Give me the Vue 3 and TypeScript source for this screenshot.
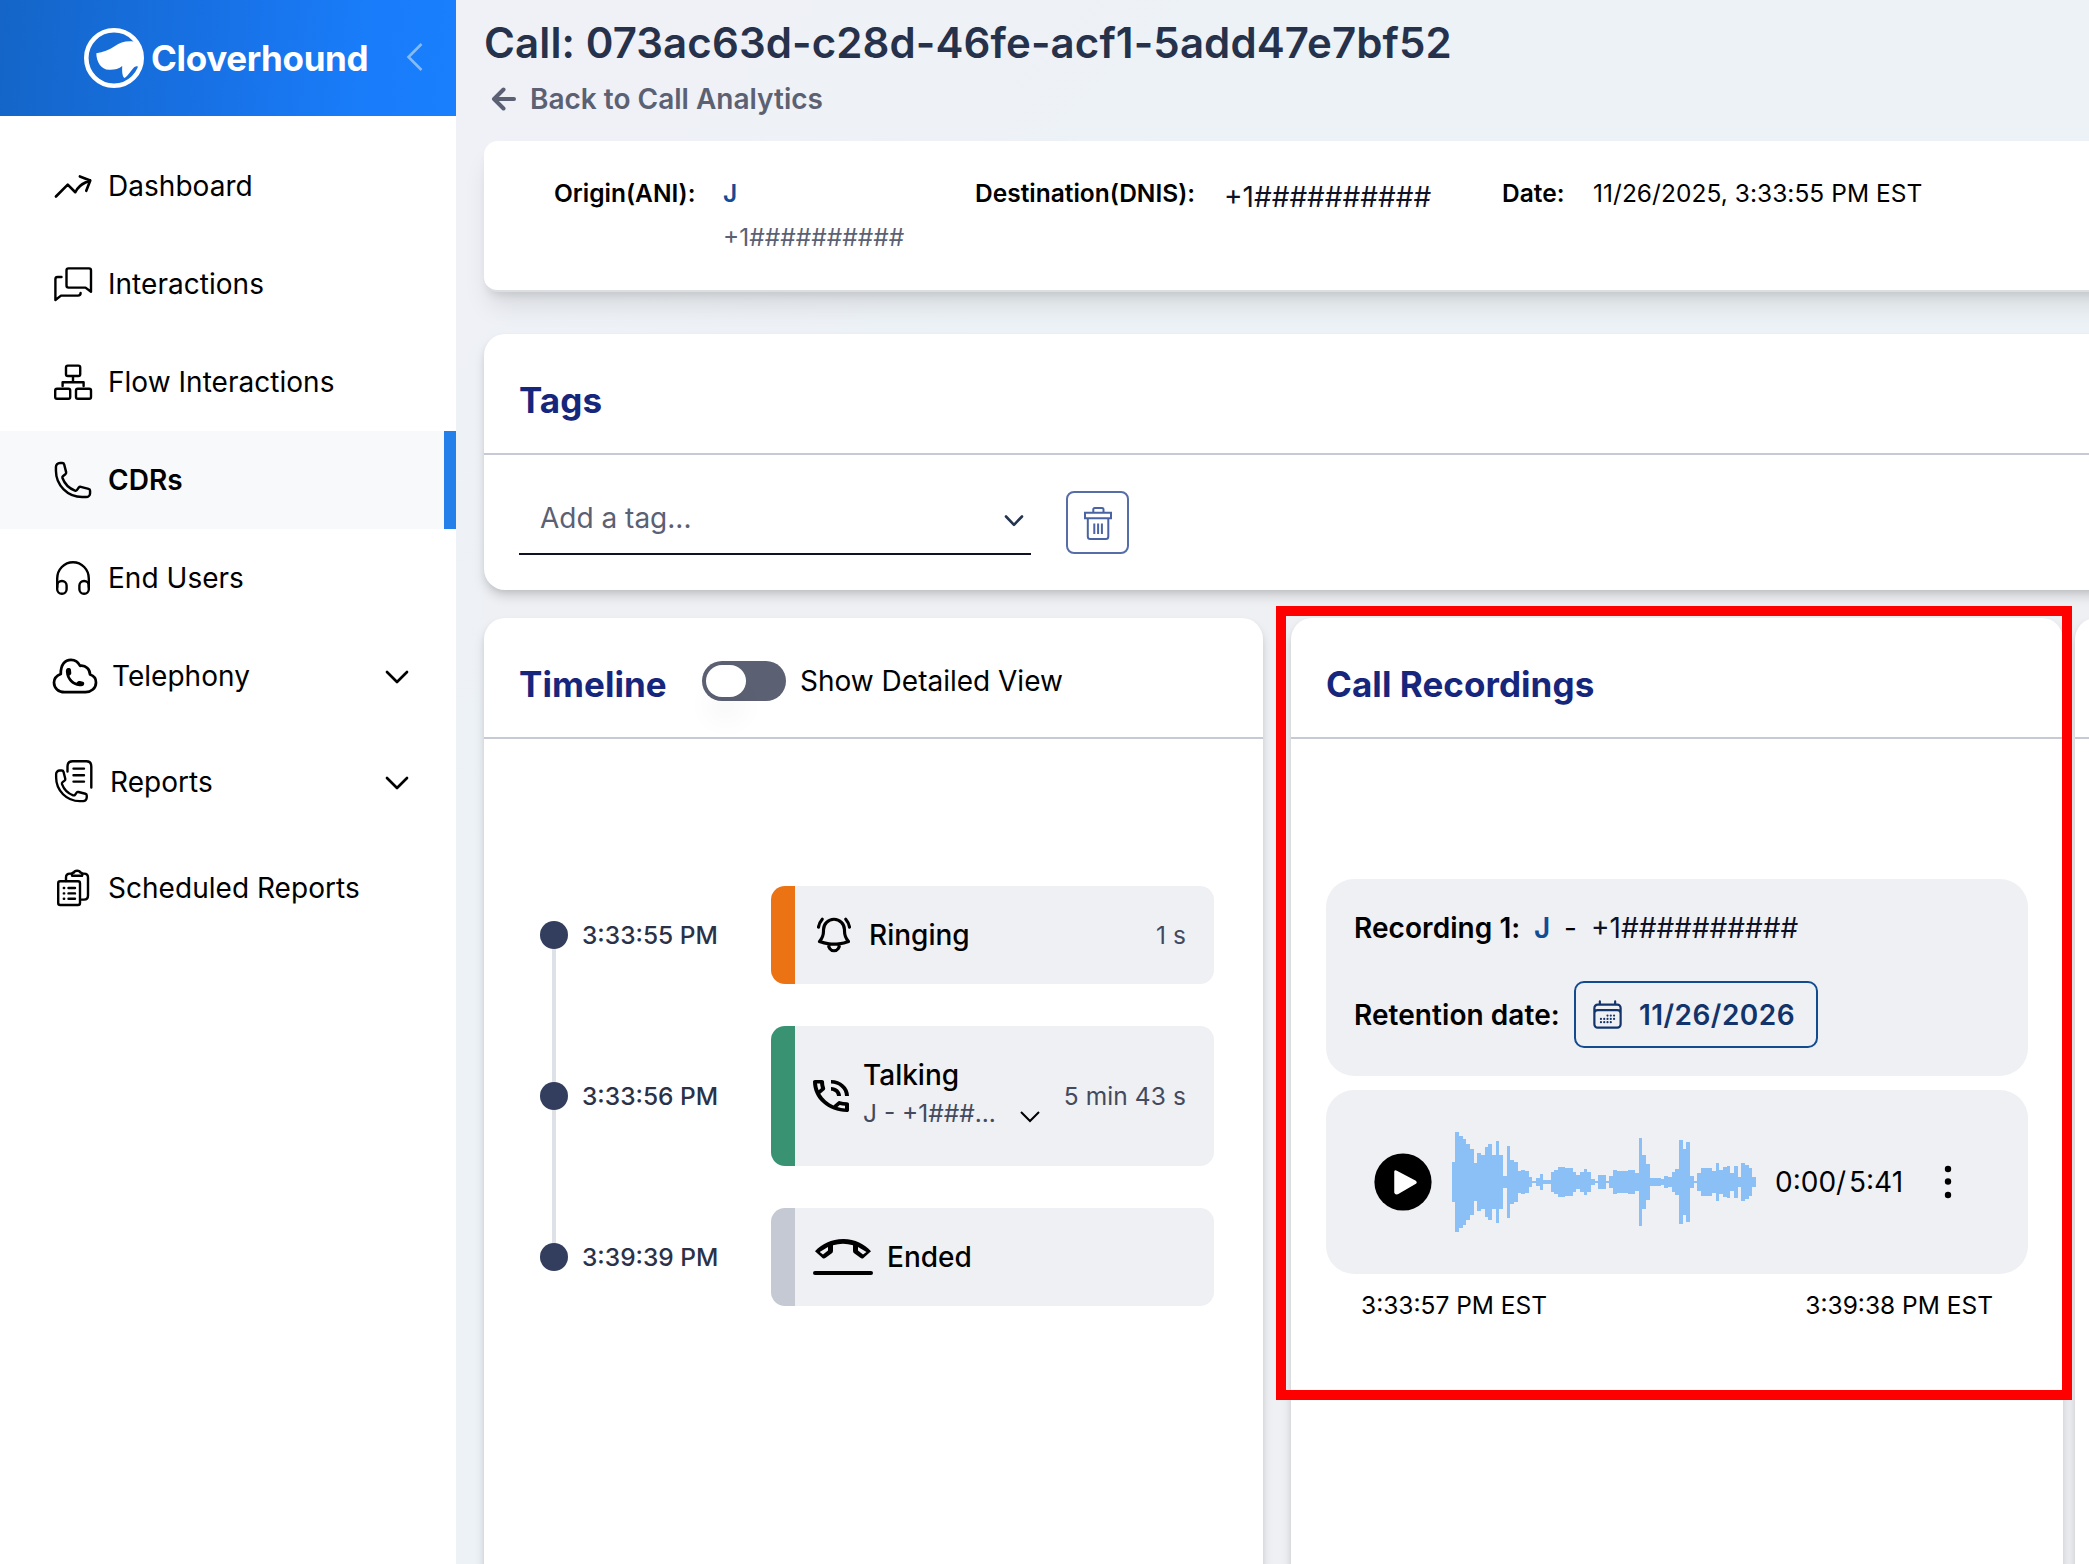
<script setup lang="ts">
interface NavItem {
  label: string
  icon: string
  active?: boolean
  expandable?: boolean
  spaced?: boolean
}

const navItems: NavItem[] = [
  { label: 'Dashboard', icon: 'trend' },
  { label: 'Interactions', icon: 'chat' },
  { label: 'Flow Interactions', icon: 'flow' },
  { label: 'CDRs', icon: 'phone', active: true },
  { label: 'End Users', icon: 'headphones' },
  { label: 'Telephony', icon: 'cloud', expandable: true },
  { label: 'Reports', icon: 'reports', expandable: true, spaced: true },
  { label: 'Scheduled Reports', icon: 'clipboard' },
]

interface TimelineEvent {
  time: string
  kind: string
  label: string
  detail?: string
  duration?: string
}

const events: TimelineEvent[] = [
  { time: '3:33:55 PM', kind: 'ringing', label: 'Ringing', duration: '1 s' },
  { time: '3:33:56 PM', kind: 'talking', label: 'Talking', detail: 'J - +1###...', duration: '5 min 43 s' },
  { time: '3:39:39 PM', kind: 'ended', label: 'Ended' },
]

// Half-heights of the waveform samples, in pixels
const peaks: number[] = [
  20, 50, 46, 43, 38, 33, 19, 29, 27, 35, 38, 27, 41, 27, 6, 36, 22, 20, 11, 12, 11, 5, 1, 4, 8, 2, 2, 10,
  12, 15, 15, 14, 14, 10, 7, 10, 13, 10, 3, 1, 7, 7, 1, 6, 12, 11, 11, 11, 12, 12, 9, 44, 27, 18, 4, 4, 4,
  3, 6, 5, 10, 13, 42, 33, 40, 6, 1, 9, 14, 14, 14, 11, 19, 12, 15, 16, 9, 16, 5, 19, 17, 14, 5,
]
const bars = peaks.map((half, i) => {
  const x = Math.floor((i * 11) / 3)
  return { x, w: Math.floor(((i + 1) * 11) / 3) - x, y: 50 - half, h: half * 2 }
})
</script>

<template>
  <div class="app">
    <aside class="sidebar">
      <header class="brand">
        <svg class="brand-logo" viewBox="84 28 60 60" width="60" height="60">
          <circle cx="114" cy="58" r="27.7" fill="none" stroke="#fff" stroke-width="4.6" />
          <path
            fill="#fff"
            d="M96.3 53.2C103 52 109 50 115 46C120 42.500 126 40.500 133.500 41.500L140 47L142 58L139 68C138 66 136.500 65.500 134.500 67C131 70 128.500 75.500 124.500 78C122 76.500 122 71 122.200 66C119 69 114 70 109 69.800C101 69.500 96.500 62 96.300 53.200Z"
          />
        </svg>
        <span class="brand-name">Cloverhound</span>
        <svg class="collapse" viewBox="0 0 18 32" width="18" height="32">
          <path d="M15.500 3L2.500 16L15.500 29" />
        </svg>
      </header>

      <nav class="nav">
        <a
          v-for="item in navItems"
          :key="item.label"
          class="nav-item"
          :class="[item.icon, { active: item.active, spaced: item.spaced }]"
        >
          <svg v-if="item.icon === 'trend'" class="nav-icon" viewBox="0 0 24 24">
            <path stroke-width="1.5" d="M2.25 18 9 11.25l4.306 4.306a11.95 11.95 0 0 1 5.814-5.518l2.74-1.22m0 0-5.94-2.281m5.94 2.28-2.28 5.941" />
          </svg>
          <svg v-else-if="item.icon === 'chat'" class="nav-icon" viewBox="52 263 42 42">
            <path d="M68.500 268.400H89Q91 268.400 91 270.400V291.800L85.500 287.600H68.500Q66.500 287.600 66.500 285.600V270.400Q66.500 268.400 68.500 268.400Z" />
            <path d="M61.500 277H57.500Q55.400 277 55.400 279.200V300L61 295.600H78Q80.600 295.600 80.600 293" />
          </svg>
          <svg v-else-if="item.icon === 'flow'" class="nav-icon" viewBox="52 361 42 42">
            <rect x="66" y="365.600" width="14.200" height="10.400" rx="1.800" />
            <rect x="55.200" y="388.800" width="15" height="10" rx="1.800" />
            <rect x="76" y="388.800" width="15" height="10" rx="1.800" />
            <path d="M73 376.500V382.200M62.600 386V382.200H83.600V386" />
          </svg>
          <svg v-else-if="item.icon === 'phone'" class="nav-icon" viewBox="0 0 24 24">
            <path
              stroke-width="1.4"
              d="M2.25 6.75c0 8.284 6.716 15 15 15h2.25a2.25 2.25 0 0 0 2.25-2.25v-1.372c0-.516-.351-.966-.852-1.091l-4.423-1.106c-.44-.11-.902.055-1.173.417l-.97 1.293c-.282.376-.769.542-1.21.38a12.035 12.035 0 0 1-7.143-7.143c-.162-.441.004-.928.38-1.21l1.293-.97c.363-.271.527-.734.417-1.173L6.963 3.102a1.125 1.125 0 0 0-1.091-.852H4.5A2.25 2.25 0 0 0 2.25 4.5v2.25Z"
            />
          </svg>
          <svg v-else-if="item.icon === 'headphones'" class="nav-icon" viewBox="52 557 42 42">
            <path d="M57.200 587V578.500A15.800 16.300 0 0 1 88.800 578.500V587" />
            <rect x="57.200" y="581" width="9.400" height="12.800" rx="4.600" />
            <rect x="79.400" y="581" width="9.400" height="12.800" rx="4.600" />
          </svg>
          <svg v-else-if="item.icon === 'cloud'" class="nav-icon wide" viewBox="52 655 46 42">
            <path stroke-width="2.700" d="M64.500 692.200H85.500C91 692.200 96 688.500 96 682.500C96 678.500 93.500 675.600 90 674.500C90 669.500 86 665 80 665.800C78 661.500 74.500 659.800 71 659.800C65 659.800 60.500 664.500 60.800 674C57 675.500 54 678.500 54 682.500C54 688 58.500 692.200 64.500 692.200Z" />
            <path fill="#000" stroke="none" d="M67 668.500C68.500 667.600 70.600 668 70.900 669.500L71.300 673C71.400 674.500 70 675.300 69.400 675.800C70.500 679 73.500 681.800 76.500 682.800C77.300 681.500 78.500 681 80 681.100L83 681.700C84.400 682 84.600 683.500 83.800 684.900C83 686.200 81 686.300 79.500 686.200C72 685.500 66.300 679.500 65.900 672C65.800 670.500 66 669.100 67 668.500Z" />
          </svg>
          <svg v-else-if="item.icon === 'reports'" class="nav-icon" viewBox="52 760 42 44">
            <path d="M67.500 771.500V766.500Q67.500 761.300 72.500 761.300H86.500Q91.300 761.300 91.300 766.500V787.500M73.500 768.600H84M73.500 775.200H84M73.500 781.600H84" />
            <path transform="translate(52.6 767) scale(1.57)" stroke-width="1.500" d="M2.25 6.75c0 8.284 6.716 15 15 15h2.25a2.25 2.25 0 0 0 2.25-2.25v-1.372c0-.516-.351-.966-.852-1.091l-4.423-1.106c-.44-.11-.902.055-1.173.417l-.97 1.293c-.282.376-.769.542-1.21.38a12.035 12.035 0 0 1-7.143-7.143c-.162-.441.004-.928.38-1.21l1.293-.97c.363-.271.527-.734.417-1.173L6.963 3.102a1.125 1.125 0 0 0-1.091-.852H4.5A2.25 2.25 0 0 0 2.25 4.5v2.25Z" />
          </svg>
          <svg v-else class="nav-icon" viewBox="52 867 42 42">
            <rect x="58.200" y="881.200" width="21.800" height="23.800" rx="2" />
            <path d="M66 881V877.500Q66 873.600 70 873.600H71.500M82.500 873.600H84Q88 873.600 88 877.500V895.500Q88 899.600 84 899.600H80.500" />
            <path d="M72.200 875.800C71 874 72.500 872.500 74 872.500C74.500 870.200 79.700 870.200 80.300 872.500C82 872.500 83 874 82 875.800Z" />
            <path d="M63.800 888H64.200M68.500 888H75M63.800 893.400H64.200M68.500 893.400H75M63.800 898.700H64.200M68.500 898.700H75" />
          </svg>
          <span class="nav-label">{{ item.label }}</span>
          <svg v-if="item.expandable" class="nav-chevron" viewBox="0 0 24 14" width="24" height="14">
            <path d="M2 2L12 12L22 2" />
          </svg>
        </a>
      </nav>
    </aside>

    <main class="main">
      <h1 class="title">Call: 073ac63d-c28d-46fe-acf1-5add47e7bf52</h1>
      <a class="back">
        <svg viewBox="0 0 26 26" width="26" height="26"><path d="M23 13H4M12.500 3.500L3 13L12.500 22.500" /></svg>
        <span>Back to Call Analytics</span>
      </a>

      <section class="summary">
        <div class="field origin">
          <span class="field-label">Origin(ANI):</span>
          <div class="field-stack">
            <a class="caller">J</a>
            <span class="number-sub">+1##########</span>
          </div>
        </div>
        <div class="field destination">
          <span class="field-label">Destination(DNIS):</span>
          <span class="number">+1##########</span>
        </div>
        <div class="field">
          <span class="field-label date-label">Date:</span>
          <span class="field-value">11/26/2025, 3:33:55 PM EST</span>
        </div>
      </section>

      <section class="card tags">
        <header class="card-head"><h2>Tags</h2></header>
        <div class="tags-body">
          <div class="select">
            <span>Add a tag...</span>
            <svg viewBox="0 0 20 14" width="20" height="14"><path d="M2 2.500L10 10.800L18 2.500" /></svg>
          </div>
          <button class="trash" type="button">
            <svg viewBox="1083 505 30 36" width="30" height="36">
              <path d="M1093.300 512V509.500Q1093.300 508 1094.800 508H1102Q1103.500 508 1103.500 509.500V512M1085 512.800H1111V518.300H1085ZM1087.800 518.500V536.500Q1087.800 539 1090.300 539H1105.800Q1108.300 539 1108.300 536.500V518.500M1094.300 523.500V534M1098.100 523.500V534M1101.900 523.500V534" />
            </svg>
          </button>
        </div>
      </section>

      <div class="columns">
        <section class="card timeline">
          <header class="card-head">
            <h2 class="timeline-title">Timeline</h2>
            <span class="toggle"><span class="knob"></span></span>
            <span class="toggle-label">Show Detailed View</span>
          </header>
          <ol class="events">
            <li v-for="event in events" :key="event.time" class="event" :class="event.kind">
              <span class="dot"></span>
              <time class="event-time">{{ event.time }}</time>
              <div class="event-card">
                <svg v-if="event.kind === 'ringing'" class="bell" viewBox="0 0 24 24" width="42" height="42">
                  <path d="M14.857 17.082a23.848 23.848 0 0 0 5.454-1.31A8.967 8.967 0 0 1 18 9.75V9A6 6 0 0 0 6 9v.75a8.967 8.967 0 0 1-2.312 6.022c1.733.64 3.56 1.085 5.455 1.31m5.714 0a24.255 24.255 0 0 1-5.714 0m5.714 0a3 3 0 1 1-5.714 0M3.124 7.5A8.969 8.969 0 0 1 5.292 3m13.416 0a8.969 8.969 0 0 1 2.168 4.5" />
                </svg>
                <svg v-else-if="event.kind === 'talking'" class="talk" viewBox="3 3 18 18" width="36" height="32" preserveAspectRatio="none">
                  <path d="M15 12h2c0-2.76-2.24-5-5-5v2c1.66 0 3 1.34 3 3zm4 0h2c0-4.97-4.03-9-9-9v2c3.87 0 7 3.13 7 7zm1 3.5c-1.25 0-2.45-.2-3.57-.57-.1-.03-.21-.05-.31-.05-.26 0-.51.1-.71.29l-2.2 2.2c-2.83-1.44-5.15-3.75-6.59-6.58l2.2-2.21c.28-.27.36-.66.25-1.01C8.7 6.45 8.5 5.25 8.5 4c0-.55-.45-1-1-1H4c-.55 0-1 .45-1 1 0 9.39 7.61 17 17 17 .55 0 1-.45 1-1v-3.5c0-.55-.45-1-1-1zM5.03 5h1.5c.07.88.22 1.75.46 2.59L5.79 8.8c-.41-1.21-.67-2.48-.76-3.8zM19 18.97c-1.32-.09-2.6-.35-3.8-.76l1.2-1.2c.85.24 1.71.39 2.59.45v1.51z" />
                </svg>
                <svg v-else class="hangup" viewBox="0 0 60 38" width="60" height="38">
                  <path fill-rule="evenodd" d="M2 13.200C9 6 18 1 30.300 1C42.500 1 51 6 58 13.200L50.500 20Q49 21.200 47 19.600L41.500 15.600Q40 14.500 40 13V7.300Q30 4.300 20 7.300V13Q20 14.500 18.500 15.600L13 19.600Q11 21.200 9.500 20ZM6.700 14L15 9V12.500L10 16.500ZM53.500 14L45 9V12.500L50 16.500Z" />
                  <path d="M2 35H58" stroke="#000" stroke-width="4" stroke-linecap="round" />
                </svg>
                <div class="event-text">
                  <span class="event-label">{{ event.label }}</span>
                  <span v-if="event.detail" class="event-detail">
                    <span class="event-party">{{ event.detail }}</span>
                    <svg viewBox="0 0 20 12" width="20" height="12"><path d="M1 1L10 10L19 1" /></svg>
                  </span>
                </div>
                <span v-if="event.duration" class="duration">{{ event.duration }}</span>
              </div>
            </li>
          </ol>
        </section>

        <section class="card recordings">
          <header class="card-head"><h2>Call Recordings</h2></header>
          <div class="recordings-body">
            <div class="recording-info">
              <div class="info-row">
                <strong>Recording 1:</strong>
                <a class="caller">J</a>
                <span class="dash">-</span>
                <span class="number">+1##########</span>
              </div>
              <div class="info-row retention">
                <strong>Retention date:</strong>
                <button class="date-button" type="button">
                  <svg viewBox="0 0 24 24" width="35" height="35">
                    <path d="M6.75 3v2.25M17.25 3v2.25M3 18.75V7.5a2.25 2.25 0 0 1 2.25-2.25h13.5A2.25 2.25 0 0 1 21 7.5v11.25m-18 0A2.25 2.25 0 0 0 5.25 21h13.5A2.25 2.25 0 0 0 21 18.75m-18 0v-7.5A2.25 2.25 0 0 1 5.25 9h13.5A2.25 2.25 0 0 1 21 11.25v7.5m-9-6h.008v.008H12v-.008ZM12 15h.008v.008H12V15Zm0 2.25h.008v.008H12v-.008ZM9.75 15h.008v.008H9.75V15Zm0 2.25h.008v.008H9.75v-.008ZM7.5 15h.008v.008H7.5V15Zm0 2.25h.008v.008H7.5v-.008Zm6.75-4.5h.008v.008h-.008v-.008Zm0 2.25h.008v.008h-.008V15Zm0 2.25h.008v.008h-.008v-.008Zm2.25-4.5h.008v.008H16.5v-.008Zm0 2.25h.008v.008H16.5V15Z" />
                  </svg>
                  <span>11/26/2026</span>
                </button>
              </div>
            </div>
            <div class="player">
              <svg class="play" viewBox="0 0 58 58" width="58" height="58">
                <circle cx="29" cy="29" r="28.600" />
                <path d="M22.500 18.500L41.500 28.500Q42.500 29.300 41.500 30.200L23.500 40.500Q21.500 41 21 39.500V18.500Q21.300 17.300 22.500 18.500Z" fill="#fff" stroke="#fff" stroke-width="1.500" stroke-linejoin="round" />
              </svg>
              <svg class="wave" viewBox="0 0 304 100" width="304" height="100" shape-rendering="crispEdges">
                <rect v-for="bar in bars" :key="bar.x" :x="bar.x" :y="bar.y" :width="bar.w" :height="bar.h" />
              </svg>
              <span class="elapsed">0:00/</span>
              <span class="total">5:41</span>
              <svg class="more" viewBox="0 0 8 34" width="8" height="34">
                <circle cx="4" cy="4" r="3.200" /><circle cx="4" cy="16.500" r="3.200" /><circle cx="4" cy="30" r="3.200" />
              </svg>
            </div>
            <div class="range">
              <span>3:33:57 PM EST</span>
              <span>3:39:38 PM EST</span>
            </div>
          </div>
          <div class="highlight"></div>
        </section>

        <section class="card next"><header class="card-head"></header></section>
      </div>
    </main>
  </div>
</template>

<style>
body {
  margin: 0;
  overflow: hidden;
}
</style>

<style scoped>
* {
  box-sizing: border-box;
}
.app {
  display: flex;
  width: 2089px;
  height: 1564px;
  overflow: hidden;
  font-family: Inter, 'Liberation Sans', sans-serif;
  font-size: 28px;
  color: #000;
  background: linear-gradient(135deg, #eff1f6 0, #eff1f6 22%, #ecf2f5 36%, #ecf2f5 100%);
}
svg {
  display: block;
  flex: none;
}
h1,
h2,
ol {
  margin: 0;
  padding: 0;
}
span,
a,
time,
strong,
h1,
h2 {
  white-space: nowrap;
}

/* Sidebar */
.sidebar {
  flex: none;
  width: 456px;
  background: #fff;
}
.brand {
  display: flex;
  align-items: center;
  height: 116px;
  padding-left: 84px;
  background: linear-gradient(95deg, #1465c7 0, #1873e9 52%, #197dfb 82%, #197ffd 100%);
}
.brand-name {
  width: 256px;
  padding-left: 7px;
  font-size: 35px;
  font-weight: 700;
  letter-spacing: -0.35px;
  color: #fff;
}
.collapse {
  margin-top: -3px;
  margin-left: 6px;
  fill: none;
  stroke: #86bbf7;
  stroke-width: 2.6;
}
.nav {
  padding-top: 21px;
}
.nav-item {
  display: flex;
  align-items: center;
  height: 98px;
  padding-left: 52px;
  padding-right: 47px;
}
.nav-item.active {
  font-weight: 600;
  background: #f8f9fb;
  border-right: 12px solid #237fea;
}
.nav-item.spaced {
  margin: 8px 0;
}
.nav-icon {
  width: 42px;
  height: 42px;
  fill: none;
  stroke: #000;
  stroke-width: 2.4;
  stroke-linecap: round;
  stroke-linejoin: round;
}
.nav-icon.wide {
  width: 46px;
}
.reports .nav-icon {
  height: 44px;
}
.nav-label {
  flex: 1;
  margin-left: 14px;
  letter-spacing: 0.03px;
}
.reports .nav-label {
  margin-left: 16px;
}
.nav-chevron {
  margin-top: 1px;
  fill: none;
  stroke: #000;
  stroke-width: 2.7;
  stroke-linecap: round;
  stroke-linejoin: round;
}

/* Page heading */
.main {
  flex: 1;
  display: flex;
  flex-direction: column;
  min-width: 0;
  padding: 15px 0 0 28px;
}
.title {
  flex: none;
  font-size: 42px;
  font-weight: 600;
  line-height: 56px;
  letter-spacing: 0.11px;
  color: #26324b;
}
.back {
  flex: none;
  display: flex;
  align-items: center;
  gap: 13px;
  height: 42px;
  margin: 7px 0 21px 7px;
  font-weight: 600;
  color: #5b6173;
}
.back svg {
  fill: none;
  stroke: #5b6173;
  stroke-width: 4;
  stroke-linecap: round;
  stroke-linejoin: round;
}

/* Call summary */
.summary {
  flex: none;
  display: flex;
  width: 1680px;
  height: 151px;
  padding: 31px 0 0 70px;
  font-size: 24.5px;
  line-height: 42px;
  background: #fff;
  border-bottom: 2px solid #dcdfe2;
  border-radius: 14px;
  box-shadow: 0 18px 26px -5px rgba(0, 0, 0, 0.1), 0 7px 10px -4px rgba(0, 0, 0, 0.1);
}
.field {
  display: flex;
}
.field-label {
  font-weight: 600;
}
.origin {
  width: 421px;
}
.origin .field-label {
  width: 169px;
}
.field-stack {
  display: flex;
  flex-direction: column;
  gap: 2px;
}
.caller {
  font-weight: 600;
  color: #134b94;
}
.number-sub {
  color: #5b6173;
}
.destination {
  width: 527px;
}
.destination .field-label {
  width: 249px;
}
.number {
  font-size: 28px;
  color: #0f1225;
}
.destination .number {
  margin-top: 4px;
}
.date-label {
  width: 91px;
}
.field-value {
  letter-spacing: 0.04px;
}

/* Cards */
.card {
  flex: none;
  background: #fff;
  border-radius: 21px;
  box-shadow: 0 7px 12px -1px rgba(0, 0, 0, 0.15), 0 3px 7px -2px rgba(0, 0, 0, 0.1);
}
.card-head {
  display: flex;
  height: 121px;
  padding: 46px 35px 0;
  border-bottom: 2px solid #c5cad5;
}
.card-head h2 {
  font-size: 35px;
  font-weight: 700;
  line-height: 40px;
  letter-spacing: 0.06px;
  color: #16267c;
}
.tags {
  width: 1680px;
  height: 256px;
  margin-top: 42px;
}
.tags-body {
  display: flex;
  align-items: flex-end;
  gap: 35px;
  height: 100px;
  padding-left: 35px;
}
.select {
  display: flex;
  align-items: center;
  justify-content: space-between;
  width: 512px;
  height: 72px;
  padding: 0 7px 0 21px;
  color: #5b6173;
  border-bottom: 2px solid #0f1225;
}
.select svg {
  margin-top: 5px;
  fill: none;
  stroke: #24344f;
  stroke-width: 2.6;
  stroke-linecap: round;
  stroke-linejoin: round;
}
.trash {
  display: flex;
  align-items: center;
  justify-content: center;
  width: 63px;
  height: 63px;
  margin-bottom: 1px;
  padding: 0;
  background: #fff;
  border: 2px solid #566da8;
  border-radius: 8px;
}
.trash svg {
  fill: none;
  stroke: #4a63a2;
  stroke-width: 2;
}
.columns {
  display: flex;
  flex: 1;
  width: 1680px;
  min-height: 0;
  padding-top: 28px;
  background: #eff0f4;
}
.columns .card {
  height: 1200px;
}
.tags,
.summary {
  position: relative;
}

/* Timeline */
.timeline {
  width: 779px;
}
.timeline-title {
  width: 183px;
}
.toggle {
  width: 84px;
  height: 40px;
  margin-top: -3px;
  padding: 4px;
  background: #5b6073;
  border-radius: 20px;
}
.knob {
  display: block;
  width: 40px;
  height: 32px;
  background: #fff;
  border-radius: 16px;
  box-shadow: 0 24px 28px -2px rgba(0, 0, 0, 0.045);
}
.toggle-label {
  margin: -3px 0 0 14px;
  line-height: 40px;
}
.events {
  display: flex;
  flex-direction: column;
  gap: 42px;
  padding: 147px 49px 0 56px;
  list-style: none;
}
.event {
  position: relative;
  display: flex;
  align-items: center;
  height: 98px;
}
.event.talking {
  height: 140px;
}
.event:not(:last-child)::after {
  position: absolute;
  top: 50%;
  left: 12px;
  width: 4px;
  height: 161px;
  background: #dfe1e9;
  content: '';
}
.dot {
  position: relative;
  z-index: 1;
  width: 28px;
  height: 28px;
  background: #333d5e;
  border-radius: 50%;
}
.event-time {
  width: 189px;
  margin-left: 14px;
  font-size: 24.5px;
  font-weight: 500;
  color: #2b3247;
}
.event-card {
  display: flex;
  align-items: center;
  flex: 1;
  height: 100%;
  padding: 0 28px 0 18px;
  background: #eff0f4;
  border-left: 24px solid #c5c9d3;
  border-radius: 14px;
}
.ringing .event-card {
  border-left-color: #eb7314;
}
.talking .event-card {
  border-left-color: #399373;
}
.bell {
  fill: none;
  stroke: #000;
  stroke-width: 1.8;
  stroke-linecap: round;
  stroke-linejoin: round;
}
.event-text {
  display: flex;
  flex: 1;
  flex-direction: column;
  margin-left: 14px;
}
.talking .event-text {
  margin: -7px 0 0 14px;
}
.event-label {
  font-weight: 500;
  line-height: 42px;
}
.event-detail {
  display: flex;
  align-items: center;
  font-size: 24.5px;
  line-height: 35px;
  color: #434a5d;
}
.event-party {
  width: 157px;
}
.event-detail svg {
  margin-top: 6px;
  fill: none;
  stroke: #000;
  stroke-width: 2;
}
.duration {
  font-size: 24.5px;
  letter-spacing: 0.1px;
  color: #434a5d;
}

/* Recordings */
.recordings {
  position: relative;
  width: 772px;
  margin-left: 28px;
}
.recordings-body {
  padding: 140px 35px 0;
}
.recording-info {
  height: 197px;
  padding: 28px;
  background: #eff0f4;
  border-radius: 28px;
}
.info-row {
  display: flex;
  align-items: center;
  height: 42px;
}
.info-row strong {
  width: 180px;
  font-weight: 600;
  letter-spacing: 0.06px;
}
.info-row .caller {
  width: 30px;
}
.dash {
  width: 27px;
}
.retention {
  height: 67px;
  margin-top: 32px;
}
.retention strong {
  width: 220px;
}
.date-button {
  display: flex;
  align-items: center;
  justify-content: space-between;
  width: 244px;
  height: 67px;
  padding: 0 21px 0 14px;
  font: 600 28px Inter, 'Liberation Sans', sans-serif;
  letter-spacing: 0.45px;
  color: #12346b;
  background: transparent;
  border: 2px solid #134b8f;
  border-radius: 10px;
}
.date-button svg {
  fill: none;
  stroke: #12346b;
  stroke-width: 1.5;
  stroke-linecap: round;
  stroke-linejoin: round;
}
.player {
  display: flex;
  align-items: center;
  height: 184px;
  margin-top: 14px;
  padding-left: 48px;
  background: #eff0f4;
  border-radius: 28px;
}
.wave {
  margin-left: 20px;
  fill: #8ac0f5;
}
.elapsed {
  width: 74px;
  margin-left: 19px;
}
.total {
  width: 95px;
}
.range {
  display: flex;
  justify-content: space-between;
  padding: 16px 35px 0;
  font-size: 24.5px;
  line-height: 30px;
}
.highlight {
  position: absolute;
  top: -12px;
  left: -15px;
  z-index: 2;
  width: 796px;
  height: 794px;
  border: 10px solid #fe0000;
}
.next {
  width: 300px;
  margin-left: 12px;
}
</style>
